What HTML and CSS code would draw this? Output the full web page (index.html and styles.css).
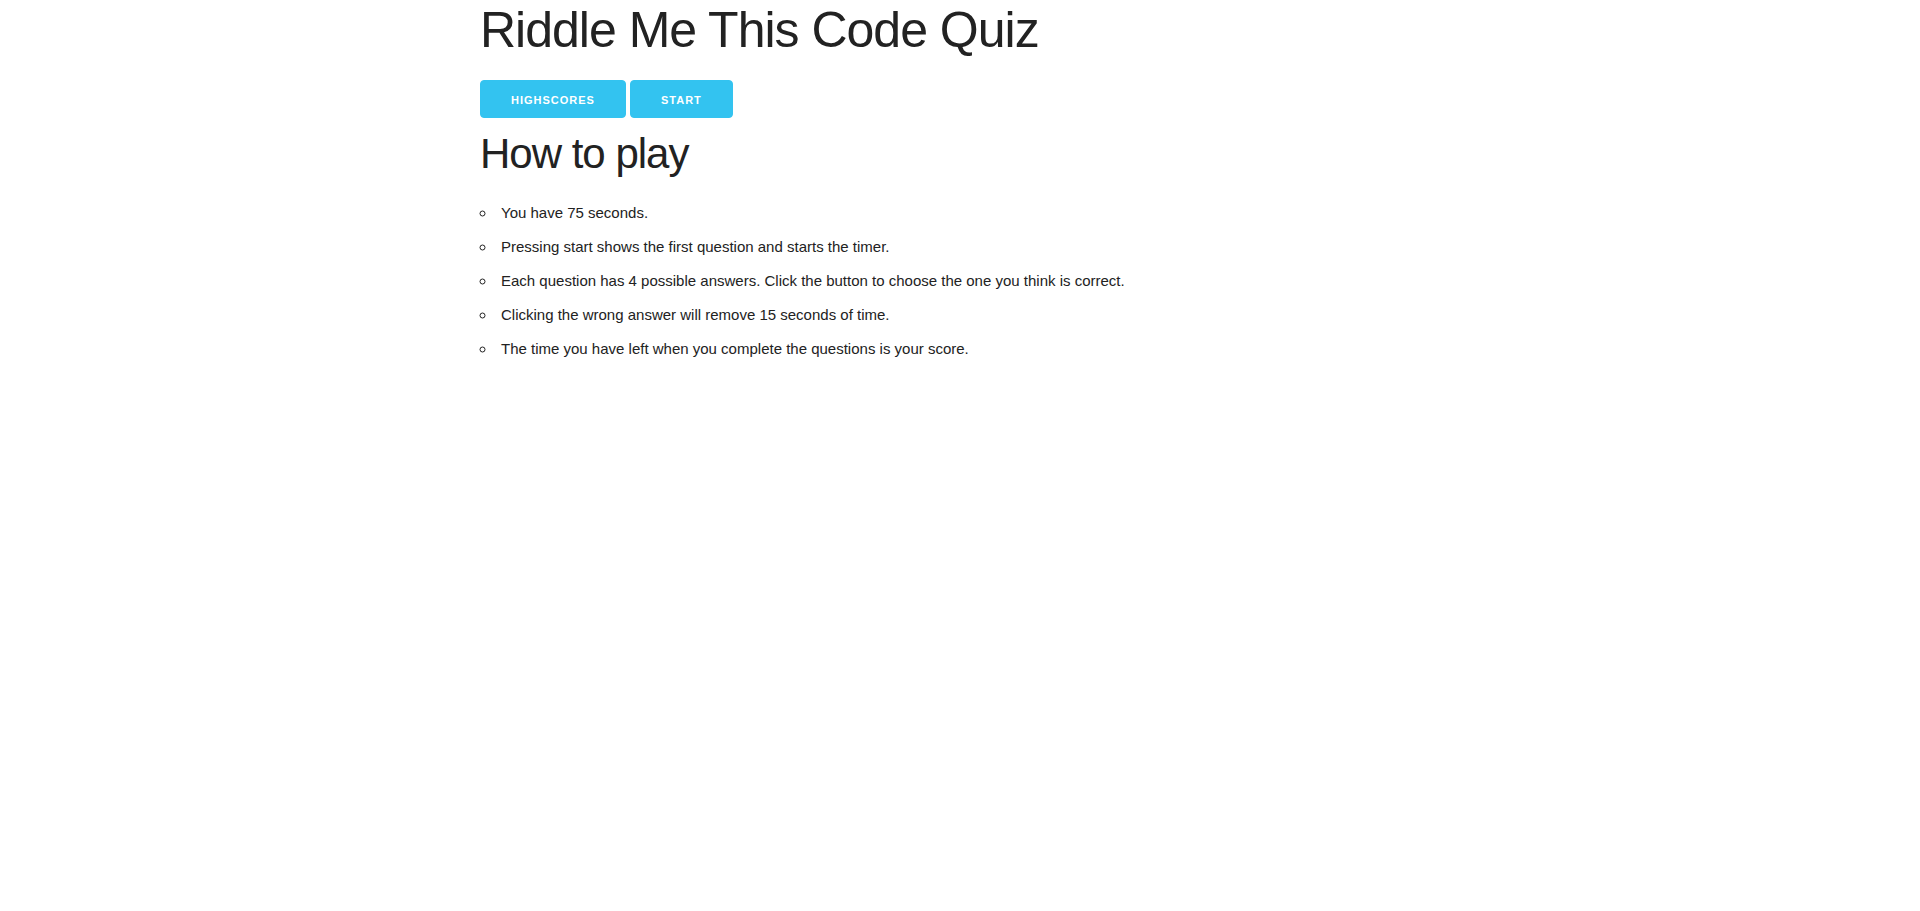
FILE: index.html
```html
<!DOCTYPE html>
<html lang="en">
<head>
<meta charset="utf-8">
<title>Riddle Me This Code Quiz</title>
<link rel="stylesheet" href="styles.css">
</head>
<body>
<div class="container">
  <h1 class="title">Riddle Me This Code Quiz</h1>
  <div class="actions">
    <button class="button-primary">Highscores</button>
    <button class="button-primary">Start</button>
  </div>
  <h2 class="subtitle">How to play</h2>
  <ul class="rules">
    <li>You have 75 seconds.</li>
    <li>Pressing start shows the first question and starts the timer.</li>
    <li>Each question has 4 possible answers. Click the button to choose the one you think is correct.</li>
    <li>Clicking the wrong answer will remove 15 seconds of time.</li>
    <li>The time you have left when you complete the questions is your score.</li>
  </ul>
</div>
</body>
</html>
```

FILE: styles.css
```css
html { font-size: 62.5%; }
body {
  margin: 0;
  font-size: 1.5em;
  line-height: 1.6;
  font-weight: 400;
  font-family: "Liberation Sans", Arial, sans-serif;
  color: #222;
  background: #fff;
}
.container {
  width: 85%;
  max-width: 960px;
  margin: 0 auto;
  box-sizing: border-box;
}
.title {
  margin: 0 0 2rem 0;
  font-size: 5rem;
  line-height: 1.2;
  letter-spacing: -0.1rem;
  font-weight: 300;
}
.subtitle {
  margin: 0 0 2rem 0;
  font-size: 4.2rem;
  line-height: 1.25;
  letter-spacing: -0.1rem;
  font-weight: 300;
}
.actions { font-size: 0; }
.button-primary {
  display: inline-block;
  height: 38px;
  padding: 0 30px;
  margin: 0 4px 1rem 0;
  color: #fff;
  text-align: center;
  font-family: "Liberation Sans", Arial, sans-serif;
  font-size: 11px;
  font-weight: 600;
  line-height: 38px;
  letter-spacing: 0.1rem;
  text-transform: uppercase;
  white-space: nowrap;
  background-color: #33C3F0;
  border: 1px solid #33C3F0;
  border-radius: 4px;
  cursor: pointer;
  box-sizing: border-box;
  vertical-align: top;
}
.rules {
  list-style: circle inside;
  padding-left: 0;
  margin: 0 0 2.5rem 0;
}
.rules li { margin-bottom: 1rem; }
```
